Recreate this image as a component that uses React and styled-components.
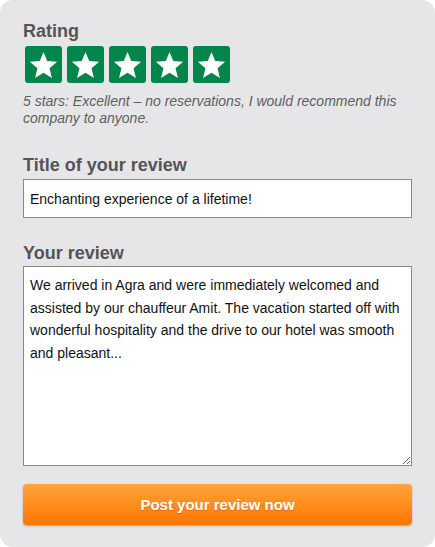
import React from "react";
import styled, { createGlobalStyle } from "styled-components";

const Global = createGlobalStyle`
  html, body { margin: 0; padding: 0; background: #ffffff; }
  body { font-family: "Liberation Sans", Arial, sans-serif; }
  * { box-sizing: border-box; }
`;

const Panel = styled.form`
  width: 435px;
  height: 547px;
  background: #e6e6e8;
  border-radius: 13px;
  padding: 20px 23px 0 23px;
  display: flex;
  flex-direction: column;
`;

const Heading = styled.h2`
  margin: 0;
  font-size: 18px;
  line-height: 22px;
  font-weight: bold;
  color: #555555;
  margin-top: ${(p) => p.$top || 0}px;
`;

const Stars = styled.div`
  display: flex;
  gap: 5px;
  margin: 4px 0 0 2px;
`;

const StarBox = styled.span`
  width: 37px;
  height: 37px;
  background: #00854a;
  border-radius: 3px;
  display: flex;
  align-items: center;
  justify-content: center;
`;

const Caption = styled.p`
  margin: 10px 0 0 0;
  font-size: 14px;
  line-height: 17px;
  font-style: italic;
  color: #5f5f5f;
`;

const TextInput = styled.input`
  display: block;
  width: 389px;
  height: 39px;
  margin-top: 3px;
  border: 1px solid #8a8a8a;
  background: #fff;
  padding: 0 6px;
  font-family: "Liberation Sans", Arial, sans-serif;
  font-size: 14px;
  color: #111;
  outline: none;
`;

const TextArea = styled.textarea`
  display: block;
  width: 389px;
  height: 200px;
  margin-top: 2px;
  border: 1px solid #8a8a8a;
  background: #fff;
  padding: 7px 6px;
  font-family: "Liberation Sans", Arial, sans-serif;
  font-size: 14px;
  line-height: 22.5px;
  color: #111;
  outline: none;
  resize: vertical;
`;

const Button = styled.button`
  margin-top: 18px;
  width: 389px;
  height: 41px;
  border: none;
  border-radius: 4px;
  background: linear-gradient(to bottom, #ffa33b 0%, #ff8e1e 50%, #ff7400 100%);
  box-shadow: 0 1px 2px rgba(0, 0, 0, 0.3);
  color: #fff;
  font-family: "Liberation Sans", Arial, sans-serif;
  font-size: 15px;
  font-weight: bold;
  text-shadow: 0 1px 1px rgba(150, 60, 0, 0.35);
  cursor: pointer;
`;

const Star = () => (
  <svg width="29" height="29" viewBox="0 0 24 24">
    <path
      fill="#ffffff"
      d="M12 1.6l3.1 7.6 8.2.6-6.3 5.3 2 8-7-4.3-7 4.3 2-8L.7 9.8l8.2-.6z"
    />
  </svg>
);

export default function App() {
  return (
    <>
      <Global />
      <Panel onSubmit={(e) => e.preventDefault()}>
        <Heading>Rating</Heading>
        <Stars>
          {[0, 1, 2, 3, 4].map((i) => (
            <StarBox key={i}>
              <Star />
            </StarBox>
          ))}
        </Stars>
        <Caption>
          5 stars: Excellent – no reservations, I would recommend this company
          to anyone.
        </Caption>
        <Heading $top={27}>Title of your review</Heading>
        <TextInput defaultValue="Enchanting experience of a lifetime!" />
        <Heading $top={24}>Your review</Heading>
        <TextArea defaultValue="We arrived in Agra and were immediately welcomed and assisted by our chauffeur Amit. The vacation started off with wonderful hospitality and the drive to our hotel was smooth and pleasant..." />
        <Button type="submit">Post your review now</Button>
      </Panel>
    </>
  );
}
